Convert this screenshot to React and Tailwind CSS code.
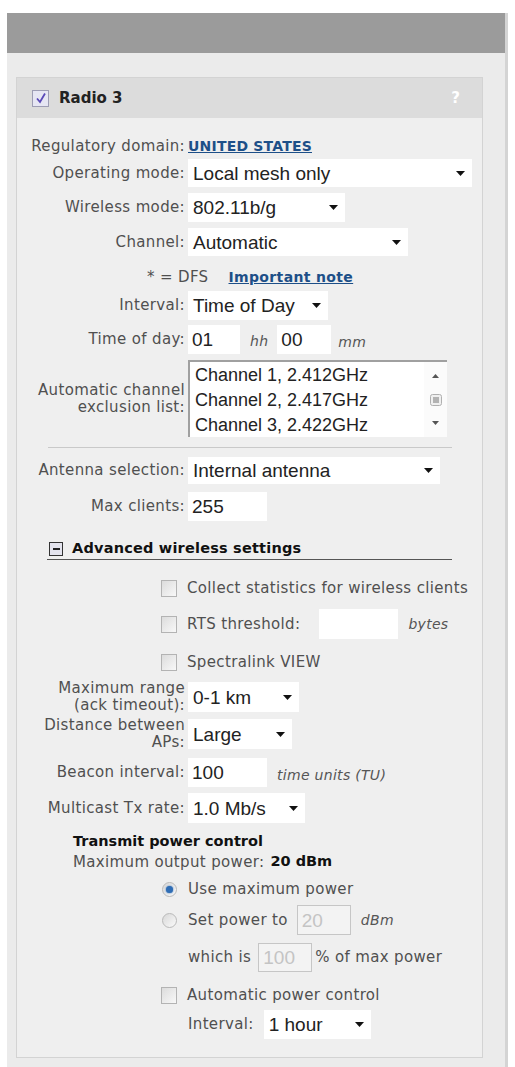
import React from "react";

const label = "font-['DejaVu_Sans',Verdana,sans-serif] text-[15px] tracking-[0.35px] text-[#505050]";
const ctrl = "font-['Liberation_Sans',Arial,sans-serif] text-[19px] text-[#222]";
const unit = "font-['DejaVu_Sans',Verdana,sans-serif] italic text-[14px] tracking-[0.3px] text-[#555]";

function Arrow() {
  return (
    <svg width="9" height="5" viewBox="0 0 9 5" className="shrink-0">
      <path d="M0 0 L9 0 L4.5 5 Z" fill="#111" />
    </svg>
  );
}

function Select({ value, className }) {
  return (
    <div className={`flex items-center justify-between bg-white pl-[5px] pr-[7px] ${ctrl} ${className}`}>
      <span className="leading-none">{value}</span>
      <Arrow />
    </div>
  );
}

function Input({ value, className, disabled }) {
  return (
    <div
      className={`flex items-center pl-[4px] font-['Liberation_Sans',Arial,sans-serif] text-[19px] ${
        disabled ? "border border-[#c6c6c6] bg-[#f3f3f3] text-[#c4c4c4]" : "bg-white text-[#222]"
      } ${className}`}
    >
      <span className="leading-none">{value}</span>
    </div>
  );
}

function Box({ checked }) {
  return (
    <div className="w-[16px] h-[17px] shrink-0 border border-[#b3b3b3] bg-[linear-gradient(135deg,#dcdcdc,#f8f8f8)] flex items-center justify-center">
      {checked && (
        <svg width="12" height="12" viewBox="0 0 12 12">
          <path d="M2 6.5 L5 10 L10 1.5" stroke="#5a49b8" strokeWidth="1.8" fill="none" />
        </svg>
      )}
    </div>
  );
}

function Radio({ checked }) {
  return (
    <div className="w-[15px] h-[15px] shrink-0 rounded-full border border-[#b9b9b9] bg-[linear-gradient(135deg,#d8d8d8,#fafafa)] flex items-center justify-center">
      {checked && <div className="w-[7px] h-[7px] rounded-full bg-[#2f6db5] shadow-[0_0_2px_#2f6db5]" />}
    </div>
  );
}

function Row({ name, className, children }) {
  return (
    <div className={`flex items-center ${className}`}>
      <div className={`w-[171px] shrink-0 pr-[3px] text-right leading-[17px] ${label}`}>{name}</div>
      {children}
    </div>
  );
}

export default function App() {
  return (
    <div className="w-[515px] min-h-[1067px] bg-white pt-[13px] pl-[7px]">
      <div className="w-[501px] min-h-[1054px] bg-[#ebebeb] border-r-[3px] border-[#d4d4d4]">
        <div className="h-[40px] bg-[#9b9b9b]" />
        <div className="pt-[24px] pl-[9px] pb-[9px]">
          <div className="w-[467px] border border-[#d3d3d3] bg-[#efefef]">
            {/* panel header */}
            <div className="h-[40px] bg-[#dcdcdc] flex items-center pl-[15px] pr-[22px]">
              <div className="w-[17px] h-[17px] border border-[#9d9db4] bg-[#e6e6f3] flex items-center justify-center">
                <svg width="12" height="12" viewBox="0 0 12 12">
                  <path d="M2 6.5 L5 10 L10 1.5" stroke="#5a49b8" strokeWidth="1.8" fill="none" />
                </svg>
              </div>
              <span className="ml-[10px] font-['DejaVu_Sans',Verdana,sans-serif] font-bold text-[15px] text-[#222]">
                Radio 3
              </span>
              <span className="ml-auto font-['DejaVu_Sans',Verdana,sans-serif] font-bold text-[15px] text-white">?</span>
            </div>

            <div className="flex flex-col pb-[18px]">
              <Row name="Regulatory domain:" className="mt-[18px] h-[20px]">
                <a className="font-['DejaVu_Sans',Verdana,sans-serif] font-bold text-[14px] tracking-[0.2px] text-[#1d4f88] underline">
                  UNITED STATES
                </a>
              </Row>
              <Row name="Operating mode:" className="mt-[3px] h-[28px]">
                <Select value="Local mesh only" className="w-[284px] h-[28px]" />
              </Row>
              <Row name="Wireless mode:" className="mt-[6px] h-[29px]">
                <Select value="802.11b/g" className="w-[157px] h-[29px]" />
              </Row>
              <Row name="Channel:" className="mt-[6px] h-[28px]">
                <Select value="Automatic" className="w-[220px] h-[28px]" />
              </Row>
              <div className={`mt-[12px] h-[18px] flex items-center pl-[130px] ${label}`}>
                <span>* = DFS</span>
                <a className="ml-[20px] font-bold text-[14px] text-[#1d4f88] underline">Important note</a>
              </div>
              <Row name="Interval:" className="mt-[5px] h-[29px]">
                <Select value="Time of Day" className="w-[140px] h-[29px]" />
              </Row>
              <Row name="Time of day:" className="mt-[5px] h-[29px]">
                <Input value="01" className="w-[52px] h-[29px]" />
                <span className={`ml-[10px] self-end pb-[2px] text-[13px] ${unit}`}>hh</span>
                <Input value="00" className="ml-[9px] w-[54px] h-[29px]" />
                <span className={`ml-[7px] self-end pb-[1px] ${unit}`}>mm</span>
              </Row>
              <Row name={<>Automatic channel<br />exclusion list:</>} className="mt-[6px] h-[77px]">
                <div className="w-[259px] h-[77px] bg-white border-t-2 border-l-2 border-[#a0a0a0] flex">
                  <div className="flex-1 pl-[5px] pt-[1px] font-['Liberation_Sans',Arial,sans-serif] text-[18px] leading-[25px] text-[#222]">
                    <div>Channel 1, 2.412GHz</div>
                    <div>Channel 2, 2.417GHz</div>
                    <div>Channel 3, 2.422GHz</div>
                  </div>
                  <div className="w-[23px] flex flex-col items-center justify-between py-[12px] bg-[#fbfbfb]">
                    <svg width="7" height="4" viewBox="0 0 7 4"><path d="M0 4 L7 4 L3.5 0 Z" fill="#555" /></svg>
                    <svg width="12" height="12" viewBox="0 0 12 12">
                      <rect x="0.5" y="0.5" width="11" height="11" rx="2" fill="#f0f0f0" stroke="#b0b0b0" />
                      <path d="M3 4 H9 M3 6 H9 M3 8 H9" stroke="#777" strokeWidth="1" />
                    </svg>
                    <svg width="7" height="4" viewBox="0 0 7 4"><path d="M0 0 L7 0 L3.5 4 Z" fill="#555" /></svg>
                  </div>
                </div>
              </Row>
              <div className="mt-[10px] ml-[31px] w-[404px] h-[1px] bg-[#c9c9c9]" />
              <Row name="Antenna selection:" className="mt-[9px] h-[27px]">
                <Select value="Internal antenna" className="w-[252px] h-[27px]" />
              </Row>
              <Row name="Max clients:" className="mt-[8px] h-[29px]">
                <Input value="255" className="w-[79px] h-[29px]" />
              </Row>

              {/* advanced section */}
              <div className="mt-[19px] ml-[30px] w-[405px] h-[20px] border-b border-[#555] flex items-center pl-[2px] pb-[1px]">
                <div className="w-[14px] h-[14px] border-[1.5px] border-[#333] bg-[#e4e4ee] flex items-center justify-center">
                  <div className="w-[7px] h-[1.5px] bg-[#222]" />
                </div>
                <span className="ml-[9px] font-['DejaVu_Sans',Verdana,sans-serif] font-bold text-[14.5px] tracking-[0.2px] text-[#111]">
                  Advanced wireless settings
                </span>
              </div>

              <div className="mt-[18px] h-[20px] flex items-center pl-[144px]">
                <Box />
                <span className={`ml-[10px] ${label}`}>Collect statistics for wireless clients</span>
              </div>
              <div className="mt-[11px] h-[30px] flex items-center pl-[144px]">
                <Box />
                <span className={`ml-[10px] ${label}`}>RTS threshold:</span>
                <Input value="" className="ml-[19px] w-[79px] h-[30px]" />
                <span className={`ml-[10px] ${unit}`}>bytes</span>
              </div>
              <div className="mt-[13px] h-[20px] flex items-center pl-[144px]">
                <Box />
                <span className={`ml-[10px] ${label}`}>Spectralink VIEW</span>
              </div>

              <Row name={<>Maximum range<br />(ack timeout):</>} className="mt-[10px] h-[30px]">
                <Select value="0-1 km" className="w-[111px] h-[30px]" />
              </Row>
              <Row name={<>Distance between<br />APs:</>} className="mt-[7px] h-[30px]">
                <Select value="Large" className="w-[104px] h-[30px]" />
              </Row>
              <Row name="Beacon interval:" className="mt-[9px] h-[29px]">
                <Input value="100" className="w-[79px] h-[29px]" />
                <span className={`ml-[10px] mt-[6px] ${unit}`}>time units (TU)</span>
              </Row>
              <Row name="Multicast Tx rate:" className="mt-[6px] h-[30px]">
                <Select value="1.0 Mb/s" className="w-[117px] h-[30px]" />
              </Row>

              {/* transmit power */}
              <div className="mt-[10px] h-[18px] flex items-center pl-[56px] font-['DejaVu_Sans',Verdana,sans-serif] font-bold text-[14.5px] text-[#111]">
                Transmit power control
              </div>
              <div className={`mt-[2px] h-[18px] flex items-center pl-[56px] ${label}`}>
                Maximum output power:
                <span className="ml-[6px] font-bold text-[14.5px] text-[#111] tracking-normal">20 dBm</span>
              </div>
              <div className="mt-[8px] h-[20px] flex items-center pl-[145px]">
                <Radio checked />
                <span className={`ml-[11px] ${label}`}>Use maximum power</span>
              </div>
              <div className="mt-[6px] h-[30px] flex items-center pl-[145px]">
                <Radio />
                <span className={`ml-[11px] ${label}`}>Set power to</span>
                <Input value="20" disabled className="ml-[9px] w-[54px] h-[30px]" />
                <span className={`ml-[10px] ${unit}`}>dBm</span>
              </div>
              <div className="mt-[8px] h-[29px] flex items-center pl-[171px]">
                <span className={label}>which is</span>
                <Input value="100" disabled className="ml-[7px] w-[54px] h-[29px]" />
                <span className={`ml-[3px] ${label}`}>% of max power</span>
              </div>
              <div className="mt-[13px] h-[20px] flex items-center pl-[144px]">
                <Box />
                <span className={`ml-[10px] ${label}`}>Automatic power control</span>
              </div>
              <div className="mt-[5px] h-[29px] flex items-center pl-[171px]">
                <span className={label}>Interval:</span>
                <Select value="1 hour" className="ml-[10px] w-[107px] h-[29px]" />
              </div>
            </div>
          </div>
        </div>
      </div>
    </div>
  );
}
